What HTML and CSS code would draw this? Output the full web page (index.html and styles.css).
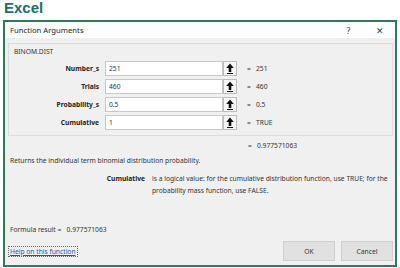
FILE: index.html
```html
<!DOCTYPE html>
<html lang="en">
<head>
    <meta charset="UTF-8">
    <title>Excel - Function Arguments</title>
    <link rel="stylesheet" href="styles.css">
</head>
<body>
    <h1 class="brand">Excel</h1>

    <div class="dialog">
        <div class="titlebar">
            <span class="title">Function Arguments</span>
            <span class="title-btn">?</span>
            <span class="title-btn close">&#x2715;</span>
        </div>

        <div class="dialog-body">
            <div class="group">
                <div class="group-name">BINOM.DIST</div>
                <div class="args">
                    <label>Number_s</label>
                    <div class="field">251</div>
                    <button class="collapse"><svg viewBox="0 0 8 11" width="8" height="11"><path d="M4 0.5 L7.8 5 H5.3 V9 H2.7 V5 H0.2 Z" fill="#111"/><rect x="1" y="10" width="6" height="1" fill="#111"/></svg></button>
                    <span class="eq">=</span>
                    <span class="val">251</span>

                    <label>Trials</label>
                    <div class="field">460</div>
                    <button class="collapse"><svg viewBox="0 0 8 11" width="8" height="11"><path d="M4 0.5 L7.8 5 H5.3 V9 H2.7 V5 H0.2 Z" fill="#111"/><rect x="1" y="10" width="6" height="1" fill="#111"/></svg></button>
                    <span class="eq">=</span>
                    <span class="val">460</span>

                    <label>Probability_s</label>
                    <div class="field">0.5</div>
                    <button class="collapse"><svg viewBox="0 0 8 11" width="8" height="11"><path d="M4 0.5 L7.8 5 H5.3 V9 H2.7 V5 H0.2 Z" fill="#111"/><rect x="1" y="10" width="6" height="1" fill="#111"/></svg></button>
                    <span class="eq">=</span>
                    <span class="val">0.5</span>

                    <label>Cumulative</label>
                    <div class="field">1</div>
                    <button class="collapse"><svg viewBox="0 0 8 11" width="8" height="11"><path d="M4 0.5 L7.8 5 H5.3 V9 H2.7 V5 H0.2 Z" fill="#111"/><rect x="1" y="10" width="6" height="1" fill="#111"/></svg></button>
                    <span class="eq">=</span>
                    <span class="val">TRUE</span>
                </div>
            </div>

            <div class="result-line">
                <span class="eq">=</span>
                <span class="val">0.977571063</span>
            </div>

            <p class="summary">Returns the individual term binomial distribution probability.</p>

            <div class="arg-help">
                <span class="arg-name">Cumulative</span>
                <span class="arg-desc">is a logical value: for the cumulative distribution function, use TRUE; for the probability mass function, use FALSE.</span>
            </div>

            <div class="formula-result">Formula result =&nbsp;&nbsp;&nbsp;0.977571063</div>

            <div class="footer">
                <a class="help-link" href="#">Help on this function</a>
                <div class="actions">
                    <button class="btn">OK</button>
                    <button class="btn">Cancel</button>
                </div>
            </div>
        </div>
    </div>
</body>
</html>
```

FILE: styles.css
```css
* {
    margin: 0;
    padding: 0;
    box-sizing: border-box;
}

body {
    background-color: white;
    font-family: "Noto Sans", "Open Sans", sans-serif;
    font-size: 6.7px;
    color: #333;
    width: 400px;
    height: 268px;
    overflow: hidden;
}

.brand {
    height: 20px;
    padding-left: 4px;
    font-family: "Liberation Sans", Arial, sans-serif;
    font-size: 15px;
    line-height: 15px;
    font-weight: bold;
    color: #1d6f68;
}

.dialog {
    margin: 0 3px;
    height: 247px;
    border: 2px solid #2d7b5c;
    display: flex;
    flex-direction: column;
}

.titlebar {
    height: 16px;
    background-color: white;
    display: flex;
    align-items: center;
    padding-left: 5px;
}

.title {
    flex: 1;
    font-size: 7.7px;
    color: #222;
}

.title-btn {
    width: 31px;
    text-align: center;
    font-size: 9px;
    color: #444;
}

.close {
    font-size: 9px;
}

.dialog-body {
    flex: 1;
    background-color: #f0f0f0;
    padding: 5px 2px 0 3px;
    display: flex;
    flex-direction: column;
}

.group {
    height: 93px;
    border: 1px solid #dcdcdc;
    padding: 2px 0 0 5px;
}

.group-name {
    height: 13px;
    line-height: 12px;
}

.args {
    display: grid;
    grid-template-columns: 93px 118px 14px 18px auto;
    grid-auto-rows: 18px;
    align-items: center;
    margin-left: -2px;
}

.args label {
    font-weight: bold;
    text-align: right;
    padding-right: 6px;
    color: #222;
}

.field {
    height: 15px;
    background-color: white;
    border: 1px solid #c8c8c8;
    line-height: 13px;
    padding-left: 3px;
}

.collapse {
    height: 15px;
    width: 14px;
    background-color: #f6f6f6;
    border: 1px solid #bdbdbd;
    display: flex;
    align-items: center;
    justify-content: center;
}

.eq {
    text-align: center;
    padding-left: 6px;
}

.val {
    padding-left: 1px;
}

.result-line {
    height: 19px;
    display: flex;
    align-items: center;
    padding-left: 236px;
}

.result-line .eq {
    padding-left: 0;
    width: 12px;
}

.summary {
    height: 14px;
    line-height: 12px;
    padding-left: 2px;
}

.arg-help {
    display: flex;
    margin-top: 4px;
    line-height: 12px;
}

.arg-name {
    width: 144px;
    text-align: right;
    font-weight: bold;
    color: #222;
    padding-right: 7px;
    flex-shrink: 0;
}

.arg-desc {
    width: 242px;
}

.formula-result {
    margin-top: auto;
    height: 12px;
    padding-left: 2px;
}

.footer {
    height: 28px;
    display: flex;
    align-items: center;
}

.help-link {
    color: #1a5aa8;
    border: 1px dotted #666;
    padding: 0 1px;
}

.actions {
    margin-left: auto;
    display: flex;
    gap: 6px;
}

.btn {
    width: 52px;
    height: 20px;
    background-color: #e1e1e1;
    border: 1px solid #cfcfcf;
    font-family: "Noto Sans", "Open Sans", sans-serif;
    font-size: 6.7px;
    color: #333;
}
```
